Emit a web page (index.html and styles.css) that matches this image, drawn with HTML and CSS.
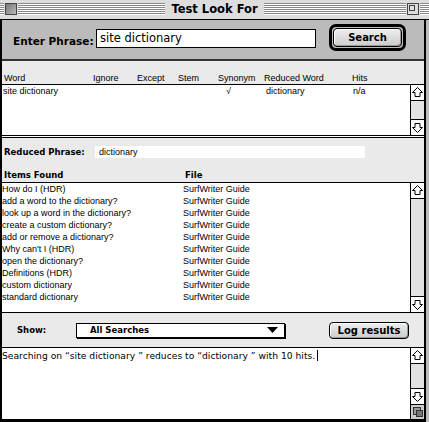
FILE: index.html
```html
<!DOCTYPE html>
<html lang="en">
<head>
    <meta charset="UTF-8">
    <title>Test Look For</title>
    <link rel="stylesheet" href="styles.css">
</head>
<body>
    <div class="window">
        <div class="titlebar">
            <span class="close-box"></span>
            <span class="title">Test Look For</span>
            <span class="zoom-box"><span></span></span>
        </div>

        <div class="content">
            <div class="phrase-panel">
                <span class="big-label">Enter Phrase:</span>
                <div class="phrase-field">site dictionary</div>
                <div class="default-ring">
                    <button class="mac-button">Search</button>
                </div>
            </div>

            <div class="word-head">
                <span>Word</span>
                <span>Ignore</span>
                <span>Except</span>
                <span>Stem</span>
                <span>Synonym</span>
                <span>Reduced Word</span>
                <span>Hits</span>
            </div>
            <div class="list-box word-list">
                <div class="rows">
                    <div class="word-row">
                        <span>site dictionary</span>
                        <span></span>
                        <span></span>
                        <span></span>
                        <span class="check">&radic;</span>
                        <span class="reduced">dictionary</span>
                        <span class="hits">n/a</span>
                    </div>
                </div>
                <div class="scrollbar">
                    <div class="arrow"><svg width="13" height="15" viewBox="0 0 13 15"><polygon points="6.5,2.5 11.5,7.5 9,7.5 9,11.5 4,11.5 4,7.5 1.5,7.5" fill="#fff" stroke="#000"/></svg></div>
                    <div class="track"></div>
                    <div class="arrow down"><svg width="13" height="15" viewBox="0 0 13 15"><polygon points="6.5,12.5 11.5,7.5 9,7.5 9,3.5 4,3.5 4,7.5 1.5,7.5" fill="#fff" stroke="#000"/></svg></div>
                </div>
            </div>
            <div class="double-rule"></div>

            <div class="reduced-row">
                <span class="small-label">Reduced Phrase:</span>
                <div class="reduced-field">dictionary</div>
            </div>
            <div class="items-head">
                <span class="small-label">Items Found</span>
                <span class="small-label">File</span>
            </div>
            <div class="list-box items-list">
                <div class="rows" id="items"></div>
                <div class="scrollbar">
                    <div class="arrow"><svg width="13" height="15" viewBox="0 0 13 15"><polygon points="6.5,2.5 11.5,7.5 9,7.5 9,11.5 4,11.5 4,7.5 1.5,7.5" fill="#fff" stroke="#000"/></svg></div>
                    <div class="track"></div>
                    <div class="arrow down"><svg width="13" height="15" viewBox="0 0 13 15"><polygon points="6.5,12.5 11.5,7.5 9,7.5 9,3.5 4,3.5 4,7.5 1.5,7.5" fill="#fff" stroke="#000"/></svg></div>
                </div>
            </div>

            <div class="show-panel">
                <span class="small-label show-label">Show:</span>
                <div class="popup">
                    <span>All Searches</span>
                    <svg width="11" height="6" viewBox="0 0 11 6"><polygon points="0,0 11,0 5.5,6" fill="#000"/></svg>
                </div>
                <button class="mac-button log-button">Log results</button>
            </div>

            <div class="list-box log-box">
                <div class="log-text">Searching on &ldquo;site dictionary &rdquo; reduces to &ldquo;dictionary &rdquo; with 10 hits.<span class="caret"></span></div>
                <div class="scrollbar">
                    <div class="arrow"><svg width="13" height="15" viewBox="0 0 13 15"><polygon points="6.5,2.5 11.5,7.5 9,7.5 9,11.5 4,11.5 4,7.5 1.5,7.5" fill="#fff" stroke="#000"/></svg></div>
                    <div class="track"></div>
                    <div class="arrow down"><svg width="13" height="15" viewBox="0 0 13 15"><polygon points="6.5,12.5 11.5,7.5 9,7.5 9,3.5 4,3.5 4,7.5 1.5,7.5" fill="#fff" stroke="#000"/></svg></div>
                    <div class="grow-box"><span class="back"></span><span class="front"></span></div>
                </div>
            </div>
        </div>
    </div>

    <script>
        const ITEMS = [
            ['How do I (HDR)', 'SurfWriter Guide'],
            ['add a word to the dictionary?', 'SurfWriter Guide'],
            ['look up a word in the dictionary?', 'SurfWriter Guide'],
            ['create a custom dictionary?', 'SurfWriter Guide'],
            ['add or remove a dictionary?', 'SurfWriter Guide'],
            ["Why can't I (HDR)", 'SurfWriter Guide'],
            ['open the dictionary?', 'SurfWriter Guide'],
            ['Definitions (HDR)', 'SurfWriter Guide'],
            ['custom dictionary', 'SurfWriter Guide'],
            ['standard dictionary', 'SurfWriter Guide']
        ];

        const list = document.getElementById('items');
        ITEMS.forEach(([title, file]) => {
            const row = document.createElement('div');
            row.className = 'item-row';
            row.innerHTML = `<span>${title}</span><span>${file}</span>`;
            list.appendChild(row);
        });
    </script>
</body>
</html>
```

FILE: styles.css
```css
* {
    margin: 0;
    padding: 0;
    box-sizing: border-box;
}

body {
    background: #fff;
    font-family: 'DejaVu Sans', sans-serif;
    color: #000;
}

.window {
    width: 429px;
    height: 422px;
    display: flex;
    flex-direction: column;
    background: #bbb;
}

/* title bar */
.titlebar {
    height: 20px;
    flex: none;
    display: flex;
    align-items: center;
    justify-content: center;
    position: relative;
    border-bottom: 1px solid #000;
    background:
        repeating-linear-gradient(to bottom, #888 0 1px, #fff 1px 2px) 0 3px / 100% 12px no-repeat,
        #ddd;
}

.title {
    background: #ddd;
    padding: 0 6px;
    font-weight: bold;
    font-size: 11.5px;
    line-height: 19px;
}

.close-box,
.zoom-box {
    position: absolute;
    top: 3px;
    width: 12px;
    height: 12px;
    border: 1px solid #444;
    box-shadow: 0 0 0 1px #ddd;
}

.close-box {
    left: 5px;
    background: linear-gradient(135deg, #777, #bbb);
}

.zoom-box {
    left: 407px;
    background: #ddd;
}

.zoom-box span {
    position: absolute;
    left: 1px;
    top: 1px;
    width: 6px;
    height: 6px;
    border: 1px solid #444;
}

.content {
    flex: 1;
    display: flex;
    flex-direction: column;
    margin-right: 3px;
    border-left: 2px solid #000;
    border-right: 2px solid #000;
    border-bottom: 3px solid #000;
    background: #eaeaea;
}

/* phrase panel */
.phrase-panel {
    height: 41px;
    flex: none;
    display: flex;
    align-items: flex-start;
    background: #bbb;
    border-bottom: 2px solid #333;
    padding: 4px 0 0 11px;
}

.big-label {
    font-weight: bold;
    font-size: 10.5px;
    width: 83px;
    margin-top: 11px;
}

.phrase-field {
    width: 220px;
    height: 19px;
    margin-top: 5px;
    background: #fff;
    border: 1px solid #000;
    font-size: 11.5px;
    line-height: 17px;
    padding-left: 3px;
}

.default-ring {
    margin-left: 13px;
    width: 77px;
    height: 27px;
    border: 3px solid #000;
    border-radius: 7px;
    padding: 1px;
    display: flex;
}

.mac-button {
    flex: 1;
    border: 1px solid #000;
    border-radius: 4px;
    background: linear-gradient(#eee, #ccc);
    box-shadow: inset 1px 1px 0 #fff, inset -1px -1px 0 #999;
    font-family: 'DejaVu Sans', sans-serif;
    font-weight: bold;
    font-size: 10px;
}

/* word table */
.word-head,
.word-row {
    display: grid;
    grid-template-columns: 89px 44px 41px 40px 46px 88px 1fr;
}

.word-head {
    height: 24px;
    flex: none;
    align-items: end;
    padding: 0 0 0 2px;
    font-family: 'Liberation Sans', sans-serif;
    font-size: 9px;
    line-height: 11px;
    border-bottom: 1px solid #000;
}

.list-box {
    display: flex;
    background: #fff;
    flex: none;
}

.rows {
    flex: 1;
    font-family: 'Liberation Sans', sans-serif;
    font-size: 9px;
}

.word-list { height: 50px; }

.double-rule {
    height: 3px;
    flex: none;
    background: #fff;
    border-top: 1px solid #000;
    border-bottom: 1px solid #000;
}

.word-row {
    line-height: 12px;
    padding-left: 1px;
}

.word-row .check { padding-left: 9px; }
.word-row .reduced { padding-left: 3px; }
.word-row .hits { padding-left: 2px; }

.scrollbar {
    width: 14px;
    flex: none;
    display: flex;
    flex-direction: column;
    border-left: 1px solid #000;
    background: #e2e2e2;
}

.arrow {
    height: 16px;
    flex: none;
    background: #fff;
    border-bottom: 1px solid #000;
}

.arrow.down {
    border-bottom: none;
    border-top: 1px solid #000;
}

.track { flex: 1; }

/* reduced phrase and items */
.reduced-row {
    height: 24px;
    flex: none;
    display: flex;
    align-items: center;
    padding: 3px 0 0 2px;
}

.small-label {
    font-weight: bold;
    font-size: 8.5px;
}

.reduced-row .small-label { width: 91px; }

.reduced-field {
    width: 270px;
    height: 12px;
    background: #fff;
    font-family: 'Liberation Sans', sans-serif;
    font-size: 9px;
    line-height: 12px;
    padding-left: 4px;
}

.items-head {
    height: 21px;
    flex: none;
    display: grid;
    grid-template-columns: 181px 1fr;
    align-items: end;
    padding: 0 0 2px 2px;
    border-bottom: 1px solid #000;
}

.items-list {
    height: 130px;
    border-bottom: 1px solid #000;
}

.item-row {
    display: grid;
    grid-template-columns: 181px 1fr;
    line-height: 12px;
}

/* show panel */
.show-panel {
    height: 35px;
    flex: none;
    display: flex;
    align-items: center;
    border-bottom: 1px solid #000;
    padding-left: 15px;
}

.show-label { width: 59px; }

.popup {
    width: 209px;
    height: 15px;
    background: #fff;
    border: 1px solid #000;
    box-shadow: 1px 1px 0 #000;
    display: flex;
    align-items: center;
    justify-content: space-between;
    padding: 0 6px 0 13px;
    font-weight: bold;
    font-size: 8.5px;
}

.log-button {
    flex: none;
    margin-left: 44px;
    width: 80px;
    height: 17px;
    font-size: 10px;
}

/* log area */
.log-box {
    flex: 1;
}

.log-text {
    flex: 1;
    font-size: 9.2px;
    line-height: 12px;
    padding: 2px 0 0 0;
}

.caret {
    display: inline-block;
    width: 1px;
    height: 11px;
    background: #000;
    margin-left: 2px;
    vertical-align: -2px;
}

.grow-box {
    height: 15px;
    flex: none;
    border-top: 1px solid #000;
    position: relative;
    background: #ccc;
}

.grow-box span {
    position: absolute;
    border: 1px solid #333;
}

.grow-box .back { left: 2px; top: 2px; width: 8px; height: 8px; background: #999; }
.grow-box .front { left: 5px; top: 5px; width: 7px; height: 7px; background: #777; }
```
